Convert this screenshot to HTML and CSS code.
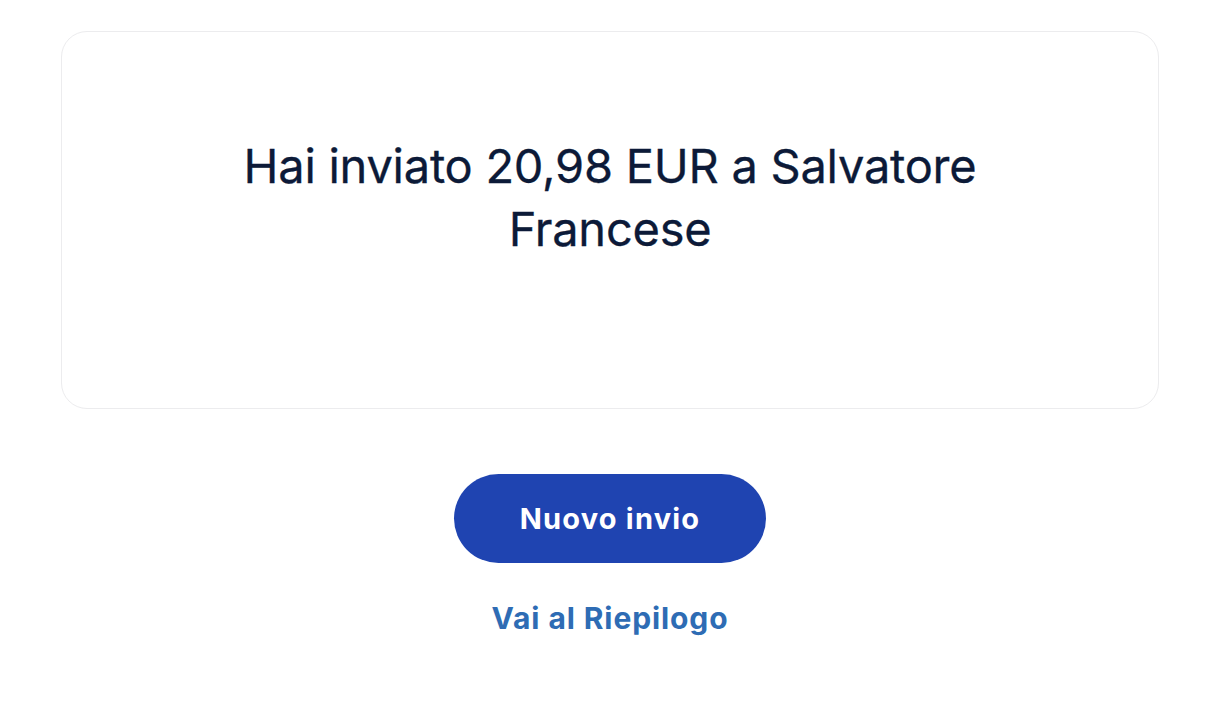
FILE: index.html
```html
<!DOCTYPE html>
<html lang="it">
<head>
<meta charset="utf-8">
<title>Invio completato</title>
<link rel="stylesheet" href="styles.css">
</head>
<body>
<main class="page">
  <section class="card">
    <h1 class="title">Hai inviato 20,98 EUR a Salvatore Francese</h1>
  </section>
  <div class="actions">
    <button class="btn-primary" type="button">Nuovo invio</button>
    <a class="link" href="#">Vai al Riepilogo</a>
  </div>
</main>
</body>
</html>
```

FILE: styles.css
```css
* { box-sizing: border-box; }
html, body { margin: 0; padding: 0; background: #ffffff; }
body { font-family: Inter, "Noto Sans", "Liberation Sans", sans-serif; }
.page {
  width: 1220px;
  height: 702px;
  padding: 31px 61px 0 61px;
  display: flex;
  flex-direction: column;
  align-items: center;
}
.card {
  width: 1098px;
  height: 378px;
  border: 1.5px solid #ececee;
  border-radius: 26px;
  display: flex;
  justify-content: center;
  padding-top: 102px;
}
.title {
  margin: 0;
  width: 760px;
  text-align: center;
  font-size: 47px;
  font-weight: 400;
  line-height: 63px;
  color: #0c1a38;
  letter-spacing: -0.25px;
  -webkit-text-stroke: 0.3px #0c1a38;
}
.actions {
  margin-top: 65px;
  display: flex;
  flex-direction: column;
  align-items: center;
}
.btn-primary {
  width: 312px;
  height: 89px;
  border: none;
  border-radius: 45px;
  background: #1f44b1;
  color: #ffffff;
  font-family: inherit;
  font-size: 29px;
  font-weight: 700;
  letter-spacing: 1.2px;
  padding: 0;
  cursor: pointer;
}
.link {
  margin-top: 37px;
  color: #2e6cb4;
  font-size: 30px;
  font-weight: 700;
  letter-spacing: 0.9px;
  text-decoration: none;
  line-height: 36px;
}
```
